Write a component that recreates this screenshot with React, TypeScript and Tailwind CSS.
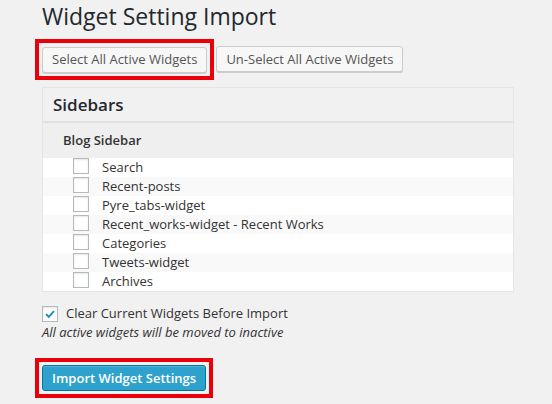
const widgets = [
  "Search",
  "Recent-posts",
  "Pyre_tabs-widget",
  "Recent_works-widget - Recent Works",
  "Categories",
  "Tweets-widget",
  "Archives",
];

const Checkbox = ({ checked = false }: { checked?: boolean }) => (
  <span className="flex h-4 w-4 shrink-0 items-center justify-center border border-[#b4b9be] bg-white shadow-[inset_0_1px_2px_rgba(0,0,0,0.1)]">
    {checked && (
      <svg viewBox="0 0 16 16" className="h-4 w-4">
        <path d="M3.5 8.2 L6.6 11.2 L12.6 4.6" fill="none" stroke="#1e8cbe" strokeWidth="2.2" />
      </svg>
    )}
  </span>
);

const App = () => {
  return (
    <div
      className="h-[404px] w-[552px] overflow-hidden bg-[#f1f1f1] pl-[42px] text-[#444]"
      style={{ fontFamily: '"Open Sans", sans-serif' }}
    >
      <h1 className="pt-[1px] text-[23px] leading-[30px] text-[#23282d]">Widget Setting Import</h1>

      <div className="mt-[8px] flex items-center">
        <div className="-ml-[7px] border-4 border-[#e8000b] p-[3px]">
          <button className="h-[26px] rounded-[3px] border border-[#cccccc] bg-[#f7f7f7] px-[9px] text-[13px] text-[#555] shadow-[0_1px_0_#ccc]">
            Select All Active Widgets
          </button>
        </div>
        <button className="ml-[2px] h-[26px] rounded-[3px] border border-[#cccccc] bg-[#f7f7f7] px-[9px] text-[13px] text-[#555] shadow-[0_1px_0_#ccc]">
          Un-Select All Active Widgets
        </button>
      </div>

      <div className="mt-[7px] w-[472px] border border-[#e5e5e5]">
        <div className="flex h-[35px] items-center border-b-2 border-[#e1e1e1] bg-[#f1f1f1] pl-[10px] text-[17px] font-semibold text-[#23282d]">
          Sidebars
        </div>
        <div className="flex h-[35px] items-center bg-[#efefef] pl-[20px] text-[13px] font-semibold text-[#333]">
          Blog Sidebar
        </div>
        {widgets.map((w, i) => (
          <div
            key={w}
            className={`flex h-[19px] items-start pl-[30px] ${i % 2 === 1 ? "bg-[#f9f9f9]" : "bg-white"}`}
          >
            <Checkbox />
            <span className="ml-[13px] text-[13px] leading-[19px] text-[#333]">{w}</span>
          </div>
        ))}
      </div>

      <div className="mt-[12px] flex items-center">
        <Checkbox checked />
        <span className="ml-[8px] text-[13px] text-[#333]">Clear Current Widgets Before Import</span>
      </div>
      <p className="text-[13px] leading-[18px] italic text-[#333]">All active widgets will be moved to inactive</p>

      <div className="-ml-[7px] mt-[17px] inline-block border-4 border-[#e8000b] p-[3px]">
        <button className="block h-[26px] rounded-[3px] border border-[#0074a2] bg-[#2ea2cc] px-[9px] text-[13px] font-semibold text-white shadow-[inset_0_1px_0_rgba(120,200,230,0.5)]">
          Import Widget Settings
        </button>
      </div>
    </div>
  );
};

export default App;
